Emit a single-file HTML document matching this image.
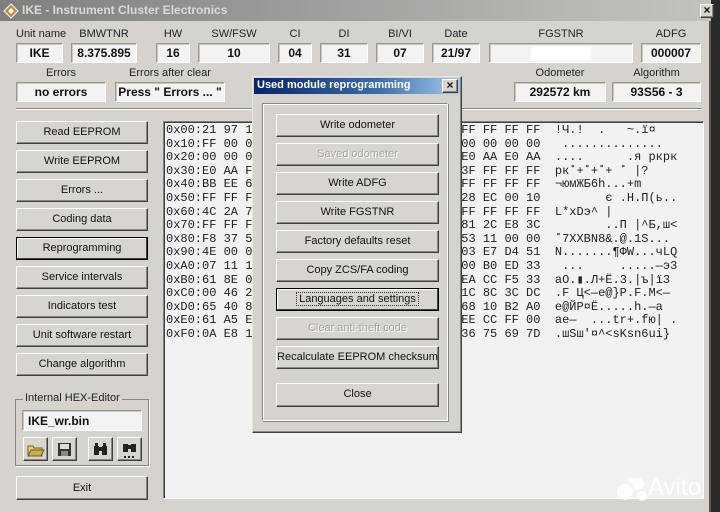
<!DOCTYPE html>
<html><head><meta charset="utf-8">
<style>
*{margin:0;padding:0;box-sizing:border-box}
body{width:720px;height:512px;overflow:hidden;background:#2a2a2a;font-family:"Liberation Sans",sans-serif;position:relative}
.a{position:absolute}
#win{left:0;top:0;width:711px;height:512px;background:#d6d3ce;border-right:2px solid #555}
#tb{left:0;top:0;width:711px;height:21px;background:linear-gradient(90deg,#7f7f7f,#b9b7b3 80%,#c4c2be);}
.lbl{font-size:11px;color:#222;text-align:center;white-space:nowrap}
.fld{background:#f3f3f3;border:1px solid #9a9890;border-right-color:#fff;border-bottom-color:#fff;box-shadow:inset 1px 1px 0 #c8c6c0;font-weight:bold;font-size:12px;text-align:center;color:#111;line-height:18px}
.btn{background:#d8d5d0;border:1px solid;border-color:#fff #404040 #404040 #fff;box-shadow:inset -1px -1px 0 #8a8780;font-size:11px;text-align:center;color:#111;line-height:20px;white-space:nowrap}
.dis{color:#a8a6a0;text-shadow:1px 1px 0 #fff}
.foc{border:1px solid #000;box-shadow:inset -1px -1px 0 #404040,inset 1px 1px 0 #fff}
#hex{left:163px;top:121px;width:541px;height:378px;background:#f2f2f2;border:1px solid #808080;border-right-color:#fff;border-bottom-color:#fff;box-shadow:inset 1px 1px 0 #404040}
pre{font-family:"Liberation Mono",monospace;font-size:12px;line-height:13.6px;color:#222}
.ib{width:25px;height:24px}
</style></head><body>
<div id="win" class="a"></div>
<div id="tb" class="a"></div>
<svg class="a" style="left:3px;top:3px" width="16" height="16"><path d="M8 1L15 8L8 15L1 8Z" fill="#c08a40" stroke="#fff"/><path d="M8 5L11 8L8 11L5 8Z" fill="#fff"/></svg>
<div class="a" style="left:22px;top:3px;font-size:12px;font-weight:bold;color:#dcdad6">IKE - Instrument Cluster Electronics</div>
<div class="a btn" style="left:700px;top:4px;width:14px;height:14px;line-height:11px;font-size:12px;font-weight:bold">×</div>

<div class="a lbl" style="left:16px;top:28px;width:47px">Unit name</div>
<div class="a lbl" style="left:71px;top:28px;width:66px">BMWTNR</div>
<div class="a lbl" style="left:156px;top:28px;width:34px">HW</div>
<div class="a lbl" style="left:198px;top:28px;width:72px">SW/FSW</div>
<div class="a lbl" style="left:278px;top:28px;width:34px">CI</div>
<div class="a lbl" style="left:320px;top:28px;width:48px">DI</div>
<div class="a lbl" style="left:376px;top:28px;width:48px">BI/VI</div>
<div class="a lbl" style="left:432px;top:28px;width:48px">Date</div>
<div class="a lbl" style="left:489px;top:28px;width:144px">FGSTNR</div>
<div class="a lbl" style="left:641px;top:28px;width:60px">ADFG</div>
<div class="a fld" style="left:16px;top:43px;width:47px;height:20px">IKE</div>
<div class="a fld" style="left:71px;top:43px;width:66px;height:20px">8.375.895</div>
<div class="a fld" style="left:156px;top:43px;width:34px;height:20px">16</div>
<div class="a fld" style="left:198px;top:43px;width:72px;height:20px">10</div>
<div class="a fld" style="left:278px;top:43px;width:34px;height:20px">04</div>
<div class="a fld" style="left:320px;top:43px;width:48px;height:20px">31</div>
<div class="a fld" style="left:376px;top:43px;width:48px;height:20px">07</div>
<div class="a fld" style="left:432px;top:43px;width:48px;height:20px">21/97</div>
<div class="a fld" style="left:489px;top:43px;width:144px;height:20px"><span style="display:inline-block;width:60px;height:14px;background:#fff;margin-top:3px"></span></div>
<div class="a fld" style="left:641px;top:43px;width:60px;height:20px">000007</div>

<div class="a lbl" style="left:16px;top:67px;width:90px">Errors</div>
<div class="a lbl" style="left:115px;top:67px;width:110px">Errors after clear</div>
<div class="a lbl" style="left:514px;top:67px;width:92px">Odometer</div>
<div class="a lbl" style="left:612px;top:67px;width:89px">Algorithm</div>
<div class="a fld" style="left:16px;top:82px;width:90px;height:20px">no errors</div>
<div class="a fld" style="left:115px;top:82px;width:110px;height:20px">Press " Errors ... "</div>
<div class="a fld" style="left:514px;top:82px;width:92px;height:20px">292572 km</div>
<div class="a fld" style="left:612px;top:82px;width:89px;height:20px">93S56 - 3</div>
<div class="a" style="left:16px;top:108px;width:686px;height:2px;border-top:1px solid #8a8780;border-bottom:1px solid #fff"></div>

<div class="a btn" style="left:16px;top:121px;width:132px;height:23px">Read EEPROM</div>
<div class="a btn" style="left:16px;top:150px;width:132px;height:23px">Write EEPROM</div>
<div class="a btn" style="left:16px;top:179px;width:132px;height:23px">Errors ...</div>
<div class="a btn" style="left:16px;top:208px;width:132px;height:23px">Coding data</div>
<div class="a btn foc" style="left:16px;top:237px;width:132px;height:23px">Reprogramming</div>
<div class="a btn" style="left:16px;top:266px;width:132px;height:23px">Service intervals</div>
<div class="a btn" style="left:16px;top:295px;width:132px;height:23px">Indicators test</div>
<div class="a btn" style="left:16px;top:324px;width:132px;height:23px">Unit software restart</div>
<div class="a btn" style="left:16px;top:353px;width:132px;height:23px">Change algorithm</div>

<div class="a" style="left:15px;top:399px;width:134px;height:67px;border:1px solid #8a8780;box-shadow:1px 1px 0 #fff"></div>
<div class="a lbl" style="left:23px;top:392px;background:#d6d3ce;padding:0 2px">Internal HEX-Editor</div>
<div class="a fld" style="left:22px;top:410px;width:120px;height:21px;text-align:left;padding-left:5px;line-height:20px">IKE_wr.bin</div>
<div class="a btn ib" style="left:23px;top:437px"><svg width="23" height="22"><path d="M4 8h5l1 2h8v8H4z" fill="#e8d070" stroke="#6a5a20"/><path d="M4 18l3-6h13l-3 6z" fill="#c8b050" stroke="#6a5a20"/></svg></div>
<div class="a btn ib" style="left:52px;top:437px"><svg width="23" height="22"><rect x="5" y="5" width="13" height="13" fill="#333"/><rect x="7" y="6" width="9" height="5" fill="#ddd"/><rect x="8" y="13" width="7" height="5" fill="#888"/></svg></div>
<div class="a btn ib" style="left:88px;top:437px"><svg width="23" height="22"><rect x="5" y="8" width="5" height="9" fill="#222"/><rect x="13" y="8" width="5" height="9" fill="#222"/><rect x="9" y="9" width="5" height="4" fill="#222"/><rect x="6" y="5" width="3" height="3" fill="#222"/><rect x="14" y="5" width="3" height="3" fill="#222"/></svg></div>
<div class="a btn ib" style="left:117px;top:437px"><svg width="23" height="22"><rect x="5" y="6" width="5" height="8" fill="#222"/><rect x="13" y="6" width="5" height="8" fill="#222"/><rect x="9" y="7" width="5" height="4" fill="#222"/><rect x="6" y="18" width="2" height="2" fill="#222"/><rect x="10" y="18" width="2" height="2" fill="#222"/><rect x="14" y="18" width="2" height="2" fill="#222"/></svg></div>
<div class="a btn" style="left:16px;top:476px;width:132px;height:24px;line-height:22px">Exit</div>

<div id="hex" class="a"></div>
<pre class="a" style="left:166px;top:124px">0x00:21 97 1A 00 00 00 00 00 00 00 00 00 FF FF FF FF  !Ч.!  .   ~.ї¤
0x10:FF 00 00 00 00 00 00 00 00 00 00 00 00 00 00 00   ..............
0x20:00 00 00 00 00 00 00 00 00 00 00 00 E0 AA E0 AA  ....      .я ркрк
0x30:E0 AA FF 00 00 00 00 00 00 00 00 00 3F FF FF FF  рк˚+˚+˚+ ˚ |?
0x40:BB EE 6D 00 00 00 00 00 00 00 00 00 FF FF FF FF  ¬юмЖБ6h...+m
0x50:FF FF FF 00 00 00 00 00 00 00 00 00 28 EC 00 10         є .Н.П(ь..
0x60:4C 2A 78 00 00 00 00 00 00 00 00 00 FF FF FF FF  L*xDэ^ |
0x70:FF FF FF 00 00 00 00 00 00 00 00 00 81 2C E8 3C         ..П |^Б,ш&lt;
0x80:F8 37 58 00 00 00 00 00 00 00 00 00 53 11 00 00  ˚7XXBN8&amp;.@.1S...
0x90:4E 00 00 00 00 00 00 00 00 00 00 00 03 E7 D4 51  N.......¶ФW...чLQ
0xA0:07 11 10 00 00 00 00 00 00 00 00 00 00 B0 ED 33   ...     .....—э3
0xB0:61 8E 00 00 00 00 00 00 00 00 00 00 EA CC F5 33  aO.▮.Л+Ё.3.|ъ|ї3
0xC0:00 46 20 00 00 00 00 00 00 00 00 00 1C 8C 3C DC  .F Ц&lt;—е@}P.F.М&lt;—
0xD0:65 40 80 00 00 00 00 00 00 00 00 00 68 10 B2 A0  е@ЙР¤Ё.....h.—а
0xE0:61 A5 E0 00 00 00 00 00 00 00 00 00 EE CC FF 00  ае—  ...tr+.fю| .
0xF0:0A E8 10 00 00 00 00 00 00 00 00 00 36 75 69 7D  .шSш'¤^&lt;sKsn6ui}</pre>

<!-- dialog -->
<div class="a" style="left:252px;top:76px;width:210px;height:357px;background:#d6d3ce;border:1px solid;border-color:#e8e6e2 #404040 #404040 #e8e6e2;box-shadow:inset -1px -1px 0 #8a8780"></div>
<div class="a" style="left:254px;top:78px;width:206px;height:16px;background:linear-gradient(90deg,#0a246a,#3a6ea5 60%,#a6caf0)"></div>
<div class="a" style="left:257px;top:79px;font-size:11px;font-weight:bold;color:#fff">Used module reprogramming</div>
<div class="a btn" style="left:442px;top:79px;width:16px;height:14px;line-height:11px;font-size:12px;font-weight:bold">×</div>
<div class="a" style="left:262px;top:103px;width:186px;height:318px;border:1px solid;border-color:#8a8780 #fff #fff #8a8780;box-shadow:inset 1px 1px 0 #fff,1px 1px 0 #8a8780"></div>
<div class="a btn" style="left:276px;top:114px;width:163px;height:23px">Write odometer</div>
<div class="a btn dis" style="left:276px;top:143px;width:163px;height:23px">Saved odometer</div>
<div class="a btn" style="left:276px;top:172px;width:163px;height:23px">Write ADFG</div>
<div class="a btn" style="left:276px;top:201px;width:163px;height:23px">Write FGSTNR</div>
<div class="a btn" style="left:276px;top:230px;width:163px;height:23px">Factory defaults reset</div>
<div class="a btn" style="left:276px;top:259px;width:163px;height:23px">Copy ZCS/FA coding</div>
<div class="a btn foc" style="left:276px;top:288px;width:163px;height:23px"><span style="border:1px dotted #333;padding:0 2px">Languages and settings</span></div>
<div class="a btn dis" style="left:276px;top:317px;width:163px;height:23px">Clear anti-theft code</div>
<div class="a btn" style="left:276px;top:346px;width:163px;height:23px">Recalculate EEPROM checksum</div>
<div class="a btn" style="left:276px;top:383px;width:163px;height:24px">Close</div>

<!-- watermark -->
<div class="a" style="left:616px;top:476px;opacity:.85">
<svg width="36" height="26"><circle cx="9" cy="16" r="8" fill="#fff"/><circle cx="22" cy="8" r="6" fill="#fff"/><circle cx="26" cy="20" r="5" fill="#fff"/><circle cx="15" cy="4" r="3" fill="#fff"/></svg></div>
<div class="a" style="left:648px;top:474px;font-size:24px;color:#fff;opacity:.85;font-family:'Liberation Sans',sans-serif">Avito</div>
</body></html>
